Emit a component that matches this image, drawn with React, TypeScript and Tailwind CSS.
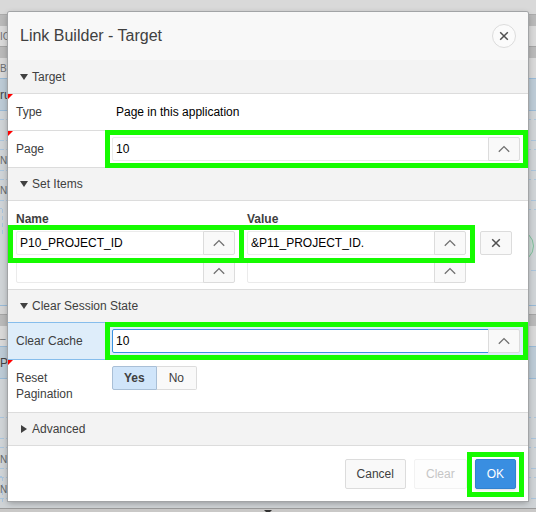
import type { ReactNode } from "react";

const control = "border border-[#dcdcdc] bg-[#f9f9f9]";

function Highlight({ className }: { className: string }) {
  return (
    <span
      aria-hidden="true"
      className={`pointer-events-none absolute z-10 border-[5px] border-[#15fb00] ${className}`}
    />
  );
}

function Chevron() {
  return (
    <svg width="12" height="8" viewBox="0 0 12 8" fill="none" stroke="#707070" strokeWidth="1.3" aria-hidden="true">
      <path d="M0.8 6.8 L6 1.6 L11.2 6.8" />
    </svg>
  );
}

function Cross() {
  return (
    <svg width="10" height="10" viewBox="0 0 10 10" fill="none" stroke="#505050" strokeWidth="1.5" aria-hidden="true">
      <path d="M1.2 1.2 L8.8 8.8 M8.8 1.2 L1.2 8.8" />
    </svg>
  );
}

function Required() {
  return (
    <svg className="absolute left-0 top-0" width="5" height="5" aria-hidden="true">
      <path d="M0 0 H5 L0 5 Z" fill="#f00" />
    </svg>
  );
}

function Section({ title, closed = false }: { title: string; closed?: boolean }) {
  return (
    <h2 className="border-b border-[#dcdcdc] bg-[#f3f3f3]">
      <button type="button" aria-expanded={!closed} className="flex h-8 w-full items-center gap-1 px-3 text-left">
        <svg width="8" height="8" viewBox="0 0 8 8" fill="#404040" aria-hidden="true">
          {closed ? <path d="M1 0 L7 4 L1 8 Z" /> : <path d="M0 1 H8 L4 7 Z" />}
        </svg>
        {title}
      </button>
    </h2>
  );
}

function Picker({ id, label, value = "", focused = false }: { id: string; label?: string; value?: string; focused?: boolean }) {
  return (
    <div className="flex h-6">
      <input
        id={id}
        aria-label={label}
        defaultValue={value}
        className={`-mr-px min-w-0 flex-1 rounded-l-xs border bg-white px-[3px] text-black outline-none ${
          focused ? "border-[#3a92e0]" : "border-[#ebebeb]"
        }`}
      />
      <button
        type="button"
        aria-label="Choose from list"
        className={`flex w-8 items-center justify-center rounded-r-xs ${control}`}
      >
        <Chevron />
      </button>
    </div>
  );
}

function Row({ label, htmlFor, required, className = "items-center border-b border-[#dcdcdc] py-1.5", children }: {
  label: string;
  htmlFor?: string;
  required?: boolean;
  className?: string;
  children: ReactNode;
}) {
  return (
    <div className={`relative grid grid-cols-[96px_1fr] px-2 ${className}`}>
      {required && <Required />}
      <label htmlFor={htmlFor} className="w-20">{label}</label>
      {children}
    </div>
  );
}

function Band({ className, children }: { className: string; children?: ReactNode }) {
  return <div className={`overflow-hidden leading-none ${className}`}>{children}</div>;
}

function Canvas({ height, left, right, letters, ring = false }: {
  height: number;
  left: number[];
  right: number[];
  letters: number[];
  ring?: boolean;
}) {
  return (
    <div className="flex justify-between bg-[#cfd3d6]">
      <svg width="8" height={height} fill="none" stroke="#a9c4dc" aria-hidden="true">
        {left.map((y) => (
          <path key={y} d={`M0 ${y}.5 H8`} strokeDasharray="4 2" />
        ))}
        <path d="M2.5 98 V123 M0 97.5 H2" strokeDasharray="4 3" />
        {letters.map((y) => (
          <text key={y} x="0" y={y} fill="#66686a" stroke="none" fontSize="10">N</text>
        ))}
      </svg>
      <svg width="8" height={height} fill="none" stroke="#a9c4dc" aria-hidden="true">
        {right.map((y, i) => (
          <path key={y} d={i % 2 ? `M3 ${y}.5 H8` : `M0 ${y}.5 H3 M6 ${y}.5 H8`} />
        ))}
        {ring && <circle cx="-10" cy="135" r="15.5" stroke="#7fbf9b" fill="#c6d6d0" />}
      </svg>
    </div>
  );
}

function Backdrop() {
  return (
    <div aria-hidden="true" className="absolute inset-0 overflow-hidden bg-[#c9c8c7] text-[10px] text-[#6c6e70]">
      <Band className="h-[15px] border-b border-[#ababab] bg-[#d9d9d9]" />
      <Band className="h-[11px] bg-[#b9b9b9]" />
      <Band className="h-[21px] border-b border-[#a4a4a4] bg-[#d9d9d9] pt-1.5">IC</Band>
      <Band className="h-[11px] bg-[#b9b9b9]" />
      <Band className="h-5 bg-[#d8d8d8] pt-1.5">B</Band>
      <Band className="h-[33px] border-y border-[#97b9d6] bg-[#bccad5] pt-2.5 text-xs text-[#444]">ru</Band>
      <Canvas height={194} left={[8, 29, 38, 59, 68, 89]} right={[8, 29, 38, 59, 68, 89, 98, 159]} letters={[53, 83]} ring />
      <Band className="h-[10px] border-b border-t border-t-[#97b9d6] border-b-[#a4a4a4] bg-[#d4d4d4]" />
      <Band className="h-[11px] bg-[#b9b9b9]" />
      <Band className="h-5 bg-[#d8d8d8] pt-2">–</Band>
      <Band className="h-[33px] border-y border-[#97b9d6] bg-[#bccad5] pt-2.5 text-xs text-[#444]">P</Band>
      <Canvas height={129} left={[38, 59, 68, 89, 98, 119]} right={[38, 59, 68, 89, 98, 119]} letters={[84, 114]} />
      <div className="flex h-1 justify-center border-t border-[#999]">
        <svg width="8" height="4"><path d="M0 1 H8 L5 4 H3 Z" fill="#333" /></svg>
      </div>
    </div>
  );
}

export default function App() {
  return (
    <main className="relative px-2 pt-3 pb-[11px] font-['Liberation_Sans',Arial,sans-serif] text-xs text-[#404040]">
      <Backdrop />
      <div
        role="dialog"
        aria-labelledby="dialog-title"
        className="relative rounded-t-xs bg-white shadow-[0_0_0_1px_#a2a4a6,0_2px_6px_rgba(0,0,0,0.3)]"
      >
        <header className="flex h-[49px] items-center justify-between rounded-t-xs border-b border-[#f3f3f3] bg-[#f8f8f8] px-3">
          <h1 id="dialog-title" className="text-base">Link Builder - Target</h1>
          <button
            type="button"
            aria-label="Close"
            className="flex size-6 items-center justify-center rounded-full border border-[#dcdcdc] bg-[#fbfbfb]"
          >
            <Cross />
          </button>
        </header>

        <Section title="Target" />
        <Row label="Type" required>
          <span className="flex h-6 items-center px-1 text-black">Page in this application</span>
        </Row>
        <Row label="Page" htmlFor="page" required>
          <Picker id="page" value="10" />
          <Highlight className="-top-px right-0 -bottom-px left-[97px]" />
        </Row>

        <Section title="Set Items" />
        <div className="border-b border-[#dcdcdc] pt-2.5 pr-4 pb-0.5 pl-2">
          <table className="w-full table-fixed border-collapse">
            <thead>
              <tr className="text-left leading-4">
                <th scope="col" className="p-0 pb-1">Name</th>
                <th scope="col" className="p-0 pb-1 pl-1.5">Value</th>
                <td className="w-[46px] p-0" />
              </tr>
            </thead>
            <tbody>
              <tr>
                <td className="relative p-0 pr-1.5 pb-1">
                  <Picker id="name-1" label="Name 1" value="P10_PROJECT_ID" />
                  <Highlight className="-top-1.5 -right-[3px] -bottom-1 -left-2" />
                </td>
                <td className="relative p-0 pb-1 pl-1.5">
                  <Picker id="value-1" label="Value 1" value="&P11_PROJECT_ID." />
                  <Highlight className="-top-1.5 -right-[9px] -bottom-1 -left-0.5" />
                </td>
                <td className="p-0 pb-1 pl-3.5">
                  <button
                    type="button"
                    aria-label="Remove item"
                    className={`flex h-6 w-8 items-center justify-center rounded-xs ${control}`}
                  >
                    <Cross />
                  </button>
                </td>
              </tr>
              <tr>
                <td className="p-0 pr-1.5 pb-1"><Picker id="name-2" label="Name 2" /></td>
                <td className="p-0 pb-1 pl-1.5"><Picker id="value-2" label="Value 2" /></td>
                <td className="p-0" />
              </tr>
            </tbody>
          </table>
        </div>

        <Section title="Clear Session State" />
        <Row label="Clear Cache" htmlFor="cache" className="-mt-px items-center border-y border-[#86bdec] bg-[#deedfa] py-1.5">
          <Picker id="cache" value="10" focused />
          <Highlight className="-top-px right-0 -bottom-px left-[97px]" />
        </Row>
        <div className="relative grid grid-cols-[96px_1fr] items-start border-b border-[#dcdcdc] px-2 pt-1.5 pb-2.5">
          <Required />
          <span id="reset-label" className="w-20 pt-1 leading-4">Reset Pagination</span>
          <div role="group" aria-labelledby="reset-label" className="flex h-6">
            <button type="button" aria-pressed="true" className="rounded-l-xs border border-[#a9bfd6] bg-[#d0e5fa] px-[11px] font-bold">
              Yes
            </button>
            <button type="button" aria-pressed="false" className={`rounded-r-xs border-l-0 px-3 ${control}`}>
              No
            </button>
          </div>
        </div>
        <Section title="Advanced" closed />

        <footer className="flex justify-end gap-2 px-3 pt-[13px] pb-3">
          <button type="button" className={`h-[30px] rounded-xs px-[11px] ${control}`}>Cancel</button>
          <button type="button" disabled className="h-[30px] rounded-xs border border-[#f2f2f2] bg-[#fdfdfd] px-[11px] text-[#c6c6c6]">
            Clear
          </button>
          <div className="relative">
            <button type="button" className="h-[30px] rounded-xs border border-[#3182d0] bg-[#398ee1] px-[11px] text-white shadow-sm">
              OK
            </button>
            <Highlight className="-top-[7px] -right-2 -bottom-2 -left-2" />
          </div>
        </footer>
      </div>
    </main>
  );
}
